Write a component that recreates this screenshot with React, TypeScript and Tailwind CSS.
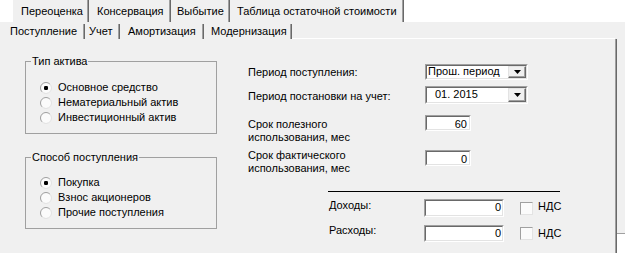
import React from "react";

function Radio({ checked }: { checked?: boolean }) {
  return (
    <svg width="12" height="12" viewBox="0 0 12 12" className="shrink-0">
      <circle cx="6" cy="6" r="5" fill="#fbfbfb" />
      <path d="M2.1 9.9A5.5 5.5 0 0 1 9.9 2.1" fill="none" stroke="#a0a0a0" />
      <path d="M9.9 2.1A5.5 5.5 0 0 1 2.1 9.9" fill="none" stroke="#e3e3e3" />
      {checked && <rect x="4" y="4" width="4" height="4" rx="1.2" fill="#000" />}
    </svg>
  );
}

function Checkbox() {
  return (
    <div className="w-[13px] h-[13px] shrink-0 bg-[#fbfbfb] border border-t-[#a0a0a0] border-l-[#a0a0a0] border-b-[#e3e3e3] border-r-[#e3e3e3]" />
  );
}

function Field({
  className,
  children,
}: {
  className: string;
  children?: React.ReactNode;
}) {
  return (
    <div
      className={`shrink-0 border border-t-[#a0a0a0] border-l-[#a0a0a0] border-b-white border-r-white ${className}`}
    >
      <div className="h-full flex border border-t-[#696969] border-l-[#696969] border-b-[#e3e3e3] border-r-[#e3e3e3] bg-white">
        {children}
      </div>
    </div>
  );
}

function DropButton() {
  return (
    <div className="w-[18px] h-full flex items-center justify-center bg-[#f0f0f0] border border-t-[#e3e3e3] border-l-[#e3e3e3] border-b-[#696969] border-r-[#696969] shadow-[inset_-1px_-1px_0_#a0a0a0]">
      <svg width="7" height="4" viewBox="0 0 7 4">
        <path d="M0 0h7L3.5 4z" fill="#000" />
      </svg>
    </div>
  );
}

function Group({
  title,
  items,
  className,
  bodyClass,
}: {
  title: string;
  items: string[];
  className: string;
  bodyClass: string;
}) {
  return (
    <fieldset className={`w-[192px] border border-[#a0a0a0] ${className}`}>
      <legend className="ml-[5px] px-[1px]">{title}</legend>
      <div className={`flex flex-col pl-[14px] pb-[8px] ${bodyClass}`}>
        {items.map((label, i) => (
          <div key={label} className="flex items-center h-[15px] gap-[6px]">
            <Radio checked={i === 0} />
            <span>{label}</span>
          </div>
        ))}
      </div>
    </fieldset>
  );
}

const tabEdge =
  "bg-[#f0f0f0] border-r border-[#696969] shadow-[inset_-1px_0_0_#a0a0a0] whitespace-nowrap";

export default function App() {
  return (
    <div className="w-[625px] h-[253px] overflow-hidden bg-white text-black text-[11px] leading-[13px] font-['Liberation_Sans',Arial,sans-serif]">
      {/* back row of tabs */}
      <div className="flex h-[22px] pl-[13px]">
        <div className={`${tabEdge} w-[76px] pt-[5px] pl-[8px]`}>Переоценка</div>
        <div className={`${tabEdge} w-[82px] pt-[5px] pl-[8px]`}>Консервация</div>
        <div className={`${tabEdge} w-[59px] pt-[5px] pl-[6px]`}>Выбытие</div>
        <div className={`${tabEdge} w-[174px] pt-[5px] pl-[7px]`}>
          Таблица остаточной стоимости
        </div>
      </div>

      <div className="bg-[#f0f0f0]">
        {/* front row of tabs */}
        <div className="flex h-[17px]">
          <div className={`${tabEdge} w-[85px] h-[15px] mt-[2px] pt-[1px] pl-[10px]`}>
            Поступление
          </div>
          <div className={`${tabEdge} w-[35px] h-[15px] mt-[2px] pt-[1px] pl-[4px]`}>Учет</div>
          <div className={`${tabEdge} w-[84px] h-[15px] mt-[2px] pt-[1px] pl-[8px]`}>
            Амортизация
          </div>
          <div className={`${tabEdge} w-[88px] h-[15px] mt-[2px] pt-[1px] pl-[7px]`}>
            Модернизация
          </div>
          <div className="w-[323px] border-b border-white" />
        </div>

        <div className="flex h-[214px]">
          <div className="w-[617px] shrink-0 flex border-r border-[#696969] shadow-[inset_-1px_0_0_#a0a0a0]">
            {/* left: radio groups */}
            <div className="w-[217px] shrink-0 pl-[25px] pt-[16px] flex flex-col">
              <Group
                title="Тип актива"
                className=""
                bodyClass="pt-[12px]"
                items={["Основное средство", "Нематериальный актив", "Инвестиционный актив"]}
              />
              <Group
                title="Способ поступления"
                className="mt-[17px]"
                bodyClass="pt-[11px]"
                items={["Покупка", "Взнос акционеров", "Прочие поступления"]}
              />
            </div>

            {/* right: form */}
            <div className="flex flex-col pl-[31px] pt-[25px]">
              <div className="flex items-center h-[16px]">
                <span className="w-[177px] shrink-0">Период поступления:</span>
                <Field className="w-[103px] h-[16px]">
                  <span className="flex-1 pl-[1px] -mt-[1px]">Прош. период</span>
                  <DropButton />
                </Field>
              </div>

              <div className="flex items-start h-[18px] mt-[6px]">
                <span className="w-[177px] shrink-0 mt-[4px]">Период постановки на учет:</span>
                <Field className="w-[103px] h-[18px]">
                  <span className="flex-1 pl-[8px]">01. 2015</span>
                  <DropButton />
                </Field>
              </div>

              <div className="flex items-start mt-[11px]">
                <span className="w-[177px] shrink-0 mt-[3px]">
                  Срок полезного
                  <br />
                  использования, мес
                </span>
                <Field className="w-[46px] h-[16px]">
                  <span className="flex-1 text-right pr-[2px] pt-[1px]">60</span>
                </Field>
              </div>

              <div className="flex items-start mt-[5px]">
                <span className="w-[177px] shrink-0">
                  Срок фактического
                  <br />
                  использования, мес
                </span>
                <Field className="w-[46px] h-[16px] mt-[1px]">
                  <span className="flex-1 text-right pr-[2px] pt-[1px]">0</span>
                </Field>
              </div>

              <div className="ml-[80px] mt-[16px] w-[232px] h-px bg-black" />

              <div className="flex items-start h-[18px] mt-[7px] ml-[81px]">
                <span className="w-[95px] shrink-0">Доходы:</span>
                <Field className="w-[80px] h-[18px]">
                  <span className="flex-1 text-right pr-[1px]">0</span>
                </Field>
                <div className="ml-[16px] mt-[3px]">
                  <Checkbox />
                </div>
                <span className="ml-[5px] mt-[1px]">НДС</span>
              </div>

              <div className="flex items-start h-[17px] mt-[8px] ml-[81px]">
                <span className="w-[95px] shrink-0 -mt-[1px]">Расходы:</span>
                <Field className="w-[80px] h-[17px]">
                  <span className="flex-1 text-right pr-[1px]">0</span>
                </Field>
                <div className="ml-[16px] mt-[2px]">
                  <Checkbox />
                </div>
                <span className="ml-[5px] mt-[2px]">НДС</span>
              </div>
            </div>
          </div>

          <div className="flex-1 flex flex-col">
            <div className="h-[195px] border-b border-[#a0a0a0]" />
            <div className="flex-1 bg-white" />
          </div>
        </div>
      </div>
    </div>
  );
}
